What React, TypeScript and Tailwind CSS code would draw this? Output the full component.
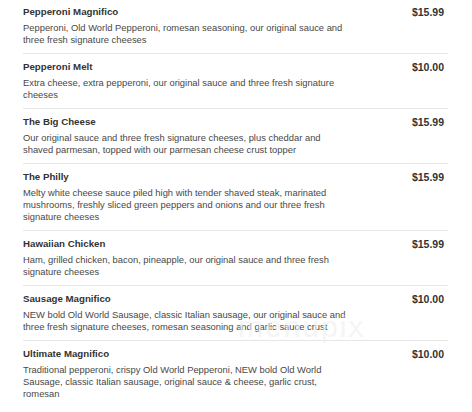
import React from 'react';

type Item = { name: string; desc: string; price: string };

const ITEMS: Item[] = [
  {
    name: 'Pepperoni Magnifico',
    desc: 'Pepperoni, Old World Pepperoni, romesan seasoning, our original sauce and three fresh signature cheeses',
    price: '$15.99',
  },
  {
    name: 'Pepperoni Melt',
    desc: 'Extra cheese, extra pepperoni, our original sauce and three fresh signature cheeses',
    price: '$10.00',
  },
  {
    name: 'The Big Cheese',
    desc: 'Our original sauce and three fresh signature cheeses, plus cheddar and shaved parmesan, topped with our parmesan cheese crust topper',
    price: '$15.99',
  },
  {
    name: 'The Philly',
    desc: 'Melty white cheese sauce piled high with tender shaved steak, marinated mushrooms, freshly sliced green peppers and onions and our three fresh signature cheeses',
    price: '$15.99',
  },
  {
    name: 'Hawaiian Chicken',
    desc: 'Ham, grilled chicken, bacon, pineapple, our original sauce and three fresh signature cheeses',
    price: '$15.99',
  },
  {
    name: 'Sausage Magnifico',
    desc: 'NEW bold Old World Sausage, classic Italian sausage, our original sauce and three fresh signature cheeses, romesan seasoning and garlic sauce crust',
    price: '$10.00',
  },
  {
    name: 'Ultimate Magnifico',
    desc: 'Traditional pepperoni, crispy Old World Pepperoni, NEW bold Old World Sausage, classic Italian sausage, original sauce & cheese, garlic crust, romesan',
    price: '$10.00',
  },
];

function MenuRow({ item, last }: { item: Item; last: boolean }) {
  return (
    <div className={`flex justify-between pt-[7px] pb-[7px] ${last ? '' : 'border-b border-[#e6e6e6]'}`}>
      <div className="w-[330px]">
        <div className="text-[9.7px] leading-[12px] font-bold text-[#333]">{item.name}</div>
        <p className="mt-[4px] text-[9.4px] leading-[12px] text-[#484848]">{item.desc}</p>
      </div>
      <div className="pr-[4px] text-[10.5px] leading-[12px] font-bold text-[#333]">{item.price}</div>
    </div>
  );
}

export default function App() {
  return (
    <div className="relative min-h-[412px] w-[472px] overflow-hidden bg-white font-['Liberation_Sans',Arial,sans-serif]">
      <div className="ml-[23px] mt-[-1px] w-[425px]">
        {ITEMS.map((item, i) => (
          <MenuRow key={item.name} item={item} last={i === ITEMS.length - 1} />
        ))}
      </div>
      {/* faint watermark */}
      <div className="pointer-events-none absolute left-[238px] top-[312px] text-[30px] leading-[30px] tracking-[2px] text-[#f0f0f0] opacity-60">
        menupix
      </div>
    </div>
  );
}
